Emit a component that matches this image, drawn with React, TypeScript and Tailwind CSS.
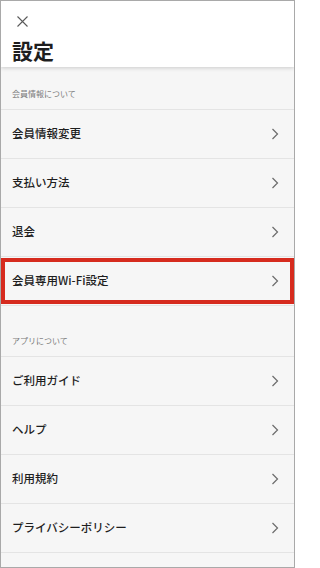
import React from 'react';

const memberItems = ['会員情報変更', '支払い方法', '退会'];
const appItems = ['ご利用ガイド', 'ヘルプ', '利用規約', 'プライバシーポリシー'];

function Chevron() {
  return (
    <svg width={8} height={12} viewBox="0 0 8 12" fill="none" stroke="#6b6b6b" strokeWidth={1.2}>
      <path d="M1.5 1 L6.5 6 L1.5 11" />
    </svg>
  );
}

function Row({ label, highlight }: { label: string; highlight?: boolean }) {
  return (
    <div className="relative flex h-[49px] items-center justify-between border-b border-[#e4e4e4] pl-[11px] pr-[15px]">
      <span className="text-[11.5px] font-medium text-[#1e1e1e]">{label}</span>
      <Chevron />
      {highlight && (
        <div className="pointer-events-none absolute left-0 right-0 top-[1px] bottom-[1px] border-4 border-[#d62b1e]" />
      )}
    </div>
  );
}

function SectionHeader({ title, tall }: { title: string; tall?: boolean }) {
  return (
    <div
      className={`flex items-end border-b border-[#e4e4e4] pl-[11px] pb-[9px] text-[8px] text-[#7a7a7a] ${
        tall ? 'h-[51px]' : 'h-[43px]'
      }`}
    >
      {title}
    </div>
  );
}

export default function App() {
  return (
    <div className="h-[568px] w-[295px] overflow-hidden border border-[#a9a9a9] bg-[#f6f6f6] font-['Noto_Sans_CJK_JP',sans-serif]">
      {/* header */}
      <div className="relative z-10 h-[66px] bg-white px-[11px] shadow-[0_1px_4px_rgba(0,0,0,0.18)]">
        <div className="pt-[15px] pl-[5px]">
          <svg width={11} height={11} viewBox="0 0 11 11" stroke="#5a5a5a" strokeWidth={1.1}>
            <path d="M0.5 0.5 L10.5 10.5 M10.5 0.5 L0.5 10.5" />
          </svg>
        </div>
        <h1 className="mt-[11px] text-[21px] font-bold leading-[24px] text-[#1e1e1e]">設定</h1>
      </div>

      <SectionHeader title="会員情報について" />
      {memberItems.map((m) => (
        <Row key={m} label={m} />
      ))}
      <Row label="会員専用Wi-Fi設定" highlight />

      <SectionHeader title="アプリについて" tall />
      {appItems.map((m) => (
        <Row key={m} label={m} />
      ))}
    </div>
  );
}
